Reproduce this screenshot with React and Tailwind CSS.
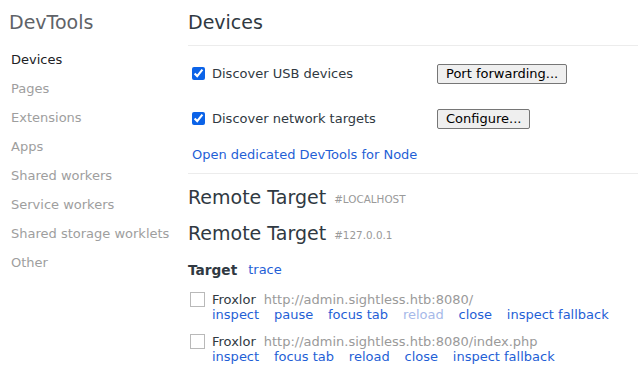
const font = { fontFamily: '"DejaVu Sans", sans-serif' };

const sideItems = [
  "Devices",
  "Pages",
  "Extensions",
  "Apps",
  "Shared workers",
  "Service workers",
  "Shared storage worklets",
  "Other",
];

const targets = [
  {
    name: "Froxlor",
    url: "http://admin.sightless.htb:8080/",
    actions: [
      { label: "inspect" },
      { label: "pause" },
      { label: "focus tab" },
      { label: "reload", disabled: true },
      { label: "close" },
      { label: "inspect fallback" },
    ],
  },
  {
    name: "Froxlor",
    url: "http://admin.sightless.htb:8080/index.php",
    actions: [
      { label: "inspect" },
      { label: "focus tab" },
      { label: "reload" },
      { label: "close" },
      { label: "inspect fallback" },
    ],
  },
];

function CheckRow({ label, button }) {
  return (
    <div className="h-[45px] flex items-center">
      <input
        type="checkbox"
        checked
        readOnly
        className="m-0 ml-[4px] w-[13px] h-[13px] accent-[#0b63e8]"
      />
      <span className="ml-[7px] w-[225px] text-[13px] text-[#303942]">{label}</span>
      <button className="h-[20px] px-[8px] border border-[#767676] rounded-[2px] bg-[#efefef] text-[13px] text-black leading-none">
        {button}
      </button>
    </div>
  );
}

function TargetItem({ t }) {
  return (
    <div className="h-[42px] pt-[4px] flex">
      <div className="w-[15px] h-[15px] ml-[2px] border border-[#b9b9b9] bg-white" />
      <div className="ml-[7px] text-[13px]">
        <div className="h-[15px] flex items-center gap-[8px]">
          <span className="text-[#303942]">{t.name}</span>
          <span className="text-[#9a9a9a]">{t.url}</span>
        </div>
        <div className="h-[15px] flex items-center gap-[14.8px]">
          {t.actions.map((a, i) => (
            <span
              key={i}
              className={a.disabled ? "text-[#a6b9e9]" : "text-[#1f5fd6] cursor-pointer"}
            >
              {a.label}
            </span>
          ))}
        </div>
      </div>
    </div>
  );
}

export default function App() {
  return (
    <div className="w-[638px] h-[377px] bg-white flex overflow-hidden" style={font}>
      <div className="w-[188px] shrink-0">
        <div className="h-[45px] flex items-center pl-[9px] text-[19px] text-[#5f6368]">
          DevTools
        </div>
        {sideItems.map((s, i) => (
          <div
            key={s}
            className={
              "h-[29px] flex items-center pl-[11px] text-[13px] " +
              (i === 0 ? "text-[#202124]" : "text-[#9e9e9e]")
            }
          >
            {s}
          </div>
        ))}
      </div>

      <div className="flex-1">
        <div className="h-[46px] flex items-center text-[19px] text-[#303942] border-b border-[#ececec]">
          Devices
        </div>

        <div className="pt-[5px] pb-[4px] border-b border-[#ececec]">
          <CheckRow label="Discover USB devices" button="Port forwarding..." />
          <CheckRow label="Discover network targets" button="Configure..." />
          <div className="h-[28px] flex items-center pl-[4px] text-[13px] text-[#1f5fd6]">
            Open dedicated DevTools for Node
          </div>
        </div>

        <div className="mt-[5px] h-[36px] flex items-center gap-[8px]">
          <span className="text-[19px] text-[#303942]">Remote Target</span>
          <span className="text-[10.4px] text-[#9a9a9a] mt-[5px]">#LOCALHOST</span>
        </div>
        <div className="h-[37px] flex items-center gap-[8px]">
          <span className="text-[19px] text-[#303942]">Remote Target</span>
          <span className="text-[10.4px] text-[#9a9a9a] mt-[5px]">#127.0.0.1</span>
        </div>

        <div className="h-[36px] flex items-center gap-[11px]">
          <span className="text-[13.7px] font-bold text-[#303942]">Target</span>
          <span className="text-[13px] text-[#1f5fd6]">trace</span>
        </div>

        {targets.map((t, i) => (
          <TargetItem key={i} t={t} />
        ))}
      </div>
    </div>
  );
}
